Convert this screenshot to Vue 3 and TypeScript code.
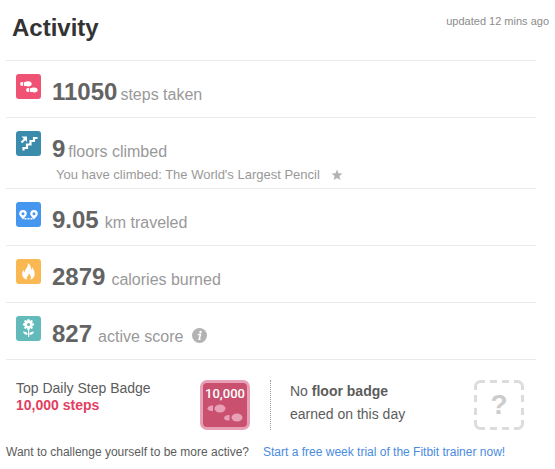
<script setup lang="ts">
type IconName = 'steps' | 'floors' | 'distance' | 'calories' | 'score'

interface Stat {
  icon: IconName
  value: string
  label: string
  tight?: boolean
  note?: string
  info?: boolean
}

const stats: Stat[] = [
  { icon: 'steps', value: '11050', label: 'steps taken', tight: true },
  {
    icon: 'floors',
    value: '9',
    label: 'floors climbed',
    tight: true,
    note: "You have climbed: The World's Largest Pencil",
  },
  { icon: 'distance', value: '9.05', label: 'km traveled' },
  { icon: 'calories', value: '2879', label: 'calories burned' },
  { icon: 'score', value: '827', label: 'active score', info: true },
]

const petals = [0, 45, 90, 135, 180, 225, 270, 315]
</script>

<template>
  <main class="activity">
    <header class="head">
      <h1>Activity</h1>
      <span class="updated">updated 12 mins ago</span>
    </header>

    <ul class="stats">
      <li v-for="stat in stats" :key="stat.icon" class="stat">
        <svg class="icon" :class="stat.icon" viewBox="0 0 25 25" aria-hidden="true">
          <g v-if="stat.icon === 'steps'" fill="#fff">
            <path d="M6 8h1.200v3.800H6a1.900 1.900 0 0 1 0-3.800z" />
            <path d="M8 8.200C9.500 8 10.300 7.300 12.300 7.300c2.200.1 3.400 1.300 3.400 2.600s-1.200 2.500-3.400 2.500c-1.700 0-2.500-.6-4.300-.7z" />
            <path d="M12 14.100h1.200v3.800H12a1.900 1.900 0 0 1 0-3.800z" />
            <path d="M14 14.300c1.500-.2 2.300-.9 4.300-.9 2.200.1 3.400 1.300 3.400 2.600s-1.200 2.500-3.400 2.500c-1.700 0-2.500-.6-4.300-.7z" />
          </g>
          <g v-else-if="stat.icon === 'floors'" fill="none" stroke="#fff">
            <path d="M7.500 19.500V17H11v-3.500h3.500V10H18V7h3.500" stroke-width="2.200" />
            <path d="M5.500 11.500L9 8" stroke-width="2" />
            <path d="M5.500 5.500H11V11z" fill="#fff" stroke="none" />
          </g>
          <g v-else-if="stat.icon === 'distance'" fill="#fff">
            <path
              fill-rule="evenodd"
              d="M7 8a3.800 3.800 0 0 1 3.800 3.800c0 2-2.300 3.500-3.800 5.700-1.500-2.200-3.800-3.700-3.800-5.700A3.800 3.800 0 0 1 7 8zm0 2.200a1.500 1.500 0 1 0 0 3 1.500 1.500 0 0 0 0-3z"
            />
            <path
              fill-rule="evenodd"
              d="M18 8a3.800 3.800 0 0 1 3.800 3.800c0 2-2.300 3.500-3.800 5.700-1.500-2.200-3.800-3.700-3.800-5.700A3.800 3.800 0 0 1 18 8zm0 2.200a1.500 1.500 0 1 0 0 3 1.500 1.500 0 0 0 0-3z"
            />
            <path d="M8.500 16h2v1.500h-2zM11.500 16h2v1.500h-2zM14.500 16h2v1.500h-2z" />
          </g>
          <path
            v-else-if="stat.icon === 'calories'"
            fill="#fff"
            d="M11.800 4c3 2 3.500 4.300 3.200 6.800 1-.6 1.200-1.500 1-2.800 2 2.500 3 5 2.500 8-.4 2.400-1.800 4-4.200 4.800 1.300-2.300.7-4.500-1.500-6.600-.1 1.500-.6 2.200-1.300 3-1 1.200-1 2.300-.3 3.600-2.800-.6-4.600-2.300-5-5-.2-2 .4-3.300 1.300-5 .1 1.300.4 2 1.200 2.600C8.500 10 12.800 8.500 11.800 4z"
          />
          <g v-else fill="#fff">
            <ellipse
              v-for="angle in petals"
              :key="angle"
              cx="12.5"
              cy="4.800"
              rx="1.400"
              ry="1.900"
              :transform="`rotate(${angle} 12.5 8.500)`"
            />
            <path
              fill-rule="evenodd"
              d="M12.500 5a3.500 3.500 0 1 1 0 7 3.500 3.500 0 0 1 0-7zm0 1.900a1.600 1.600 0 1 0 0 3.200 1.600 1.600 0 0 0 0-3.200z"
            />
            <path d="M12 14h1.200v7H12zM7 15.500c3 0 4.500 1 4.700 3.300C9 18.800 7.500 18 7 15.500zM18 15.500c-3 0-4.500 1-4.700 3.300 2.700 0 4.200-.8 4.700-3.300z" />
          </g>
        </svg>
        <div class="body">
          <p class="line" :class="{ tight: stat.tight }">
            <strong class="value">{{ stat.value }}</strong>
            <span class="label">{{ stat.label }}</span>
            <button v-if="stat.info" class="info" type="button" aria-label="About active score">
              <svg viewBox="0 0 15 15" aria-hidden="true">
                <circle cx="7.500" cy="7.500" r="7.500" fill="#b3b3b3" />
                <circle cx="8.500" cy="4" r="1.200" fill="#fff" />
                <path d="M5.800 6.500h2.600L7.200 11.300h1.300" fill="none" stroke="#fff" stroke-width="1.500" />
              </svg>
            </button>
          </p>
          <p v-if="stat.note" class="note">
            <span>{{ stat.note }}</span>
            <svg class="star" viewBox="0 0 12 12" aria-hidden="true">
              <path d="M6 0.500l1.500 3.800 4 .2-3.100 2.600 1 4L6 8.900l-3.400 2.200 1-4L.5 4.500l4-.2z" fill="#b3b3b3" />
            </svg>
          </p>
        </div>
      </li>
    </ul>

    <section class="badges">
      <div class="badge-cell">
        <p class="badge-text">Top Daily Step Badge<br /><strong class="pink">10,000 steps</strong></p>
        <div class="step-badge">
          <span>10,000</span>
          <svg viewBox="0 0 36 18" aria-hidden="true">
            <g fill="#e8a0b6">
              <path d="M6 1.500v5.500H4.500C2.300 6.800.5 5.800.5 4.500S2.300 1.800 4.500 1.500z" />
              <ellipse cx="13" cy="4.500" rx="5.500" ry="4" />
              <path d="M22.500 11v5.500H21c-2.200-.2-4-1.200-4-2.500s1.800-2.700 4-3z" />
              <ellipse cx="30" cy="13.500" rx="5.500" ry="4" />
            </g>
          </svg>
        </div>
      </div>
      <div class="badge-cell floor">
        <p class="badge-text loose">No <strong>floor badge</strong><br />earned on this day</p>
        <div class="empty-badge">
          <svg viewBox="0 0 50 50" aria-hidden="true">
            <path
              d="M1.500 10V6.500a5 5 0 0 1 5-5H11M16 1.500h7M28 1.500h7M40 1.500h3.500a5 5 0 0 1 5 5V10M48.500 15v7M48.500 28v7M48.500 40v3.500a5 5 0 0 1-5 5H40M35 48.500h-7M23 48.500h-7M11 48.500H6.500a5 5 0 0 1-5-5V40M1.500 35v-7M1.500 22v-7"
              fill="none"
              stroke="#dcdcdc"
              stroke-width="3"
            />
          </svg>
          <span>?</span>
        </div>
      </div>
    </section>

    <footer class="promo">
      <span>Want to challenge yourself to be more active?</span>
      <a href="#trainer">Start a free week trial of the Fitbit trainer now!</a>
    </footer>
  </main>
</template>

<style>
body {
  background: #fff;
}
</style>

<style scoped>
.activity {
  padding: 0 6px;
  font-family: 'Liberation Sans', Arial, Helvetica, sans-serif;
  color: #5c5c5c;
}

h1,
p,
ul {
  margin: 0;
  padding: 0;
}

.head {
  display: flex;
  justify-content: space-between;
  align-items: flex-start;
  height: 60px;
  padding-left: 6px;
}

h1 {
  padding-top: 14px;
  font-size: 24px;
  line-height: 28px;
  color: #333;
}

.updated {
  padding-top: 14px;
  font-size: 11px;
  line-height: 14px;
  color: #8c8c8c;
}

.stats {
  list-style: none;
  margin-right: 13px;
  border-bottom: 1px solid #ebebeb;
}

.stat {
  display: flex;
  gap: 11px;
  min-height: 56px;
  padding-left: 10px;
  border-top: 1px solid #ebebeb;
}

.icon {
  flex: none;
  width: 25px;
  height: 25px;
  margin-top: 13px;
  border-radius: 3px;
}

.steps {
  background: #ef5272;
}

.floors {
  background: #3b8bac;
}

.distance {
  background: #4596ee;
}

.calories {
  background: #fab853;
}

.score {
  background: #62babb;
}

.body {
  padding-top: 17px;
}

.line {
  display: flex;
  align-items: baseline;
  gap: 6px;
  line-height: 28px;
}

.tight {
  gap: 3px;
}

.value {
  font-size: 24px;
  color: #636363;
}

.label {
  font-size: 16px;
  color: #999;
}

.info {
  align-self: center;
  width: 15px;
  height: 15px;
  margin-left: 3px;
  padding: 0;
  border: 0;
  background: none;
}

.info svg {
  display: block;
}

.note {
  display: flex;
  align-items: center;
  gap: 11px;
  padding: 1px 0 5px 4px;
  font-size: 13px;
  line-height: 16px;
  color: #999;
}

.star {
  width: 12px;
  height: 12px;
}

.badges {
  display: flex;
  margin-right: 13px;
  padding: 20px 12px 0 10px;
}

.badge-cell {
  flex: 1;
  display: flex;
  justify-content: space-between;
  align-items: flex-start;
  padding-right: 20px;
}

.floor {
  padding: 0 0 0 19px;
  border-left: 1px dotted #999;
}

.badge-text {
  font-size: 14px;
  line-height: 17px;
}

.loose {
  line-height: 23px;
}

.pink {
  color: #e2405f;
}

.step-badge {
  box-sizing: border-box;
  width: 50px;
  height: 50px;
  border: 3px solid #e8a0b6;
  border-radius: 7px;
  background: #c9506f;
  color: #fff;
  text-align: center;
}

.step-badge span {
  display: block;
  padding-top: 2px;
  font-family: 'Liberation Sans Narrow', Roboto, sans-serif;
  font-size: 13px;
  font-weight: 500;
  line-height: 18px;
}

.step-badge svg {
  display: block;
  width: 36px;
  height: 18px;
  margin: 1px auto 0;
}

.empty-badge {
  display: grid;
  width: 50px;
  height: 50px;
}

.empty-badge > * {
  grid-area: 1 / 1;
}

.empty-badge span {
  place-self: center;
  font-size: 28px;
  font-weight: 700;
  line-height: 32px;
  color: #ccc;
}

.promo {
  display: flex;
  flex-wrap: wrap;
  gap: 14px;
  padding: 14px 0 10px;
  font-size: 12px;
  line-height: 16px;
}

.promo a {
  color: #4a8be0;
  text-decoration: none;
}
</style>
